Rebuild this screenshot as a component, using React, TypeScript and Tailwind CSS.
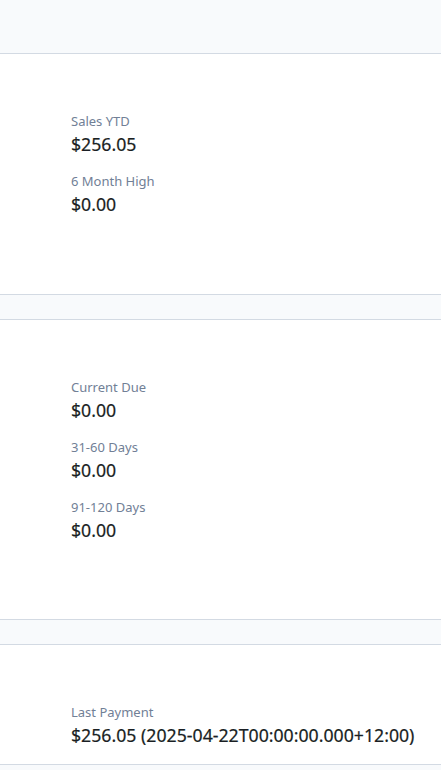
import React from 'react';

const sections = [
  {
    items: [
      { label: 'Sales YTD', value: '$256.05' },
      { label: '6 Month High', value: '$0.00' },
    ],
    pb: 'pb-[77px]',
  },
  {
    items: [
      { label: 'Current Due', value: '$0.00' },
      { label: '31-60 Days', value: '$0.00' },
      { label: '91-120 Days', value: '$0.00' },
    ],
    pb: 'pb-[76px]',
  },
  {
    items: [{ label: 'Last Payment', value: '$256.05 (2025-04-22T00:00:00.000+12:00)' }],
    pb: 'pb-[16px]',
  },
];

export default function App() {
  return (
    <div className="min-h-screen bg-[#f8fafc] font-['Noto_Sans',sans-serif]">
      {/* Top band */}
      <div className="h-[53px]" />

      {sections.map((section, i) => (
        <div key={i}>
          {i > 0 && <div className="h-6" />}
          <div className={`border-y border-[#d3dae3] bg-white pl-[71px] pt-[57px] ${section.pb}`}>
            <div className="flex flex-col gap-[14px]">
              {section.items.map((item) => (
                <div key={item.label} className="flex flex-col">
                  <span className="text-[13px] leading-[20px] text-[#718096]">{item.label}</span>
                  <span className="text-[17.7px] leading-[26px] text-[#1a1f24] [-webkit-text-stroke:0.2px_#1a1f24]">
                    {item.value}
                  </span>
                </div>
              ))}
            </div>
          </div>
        </div>
      ))}
    </div>
  );
}
